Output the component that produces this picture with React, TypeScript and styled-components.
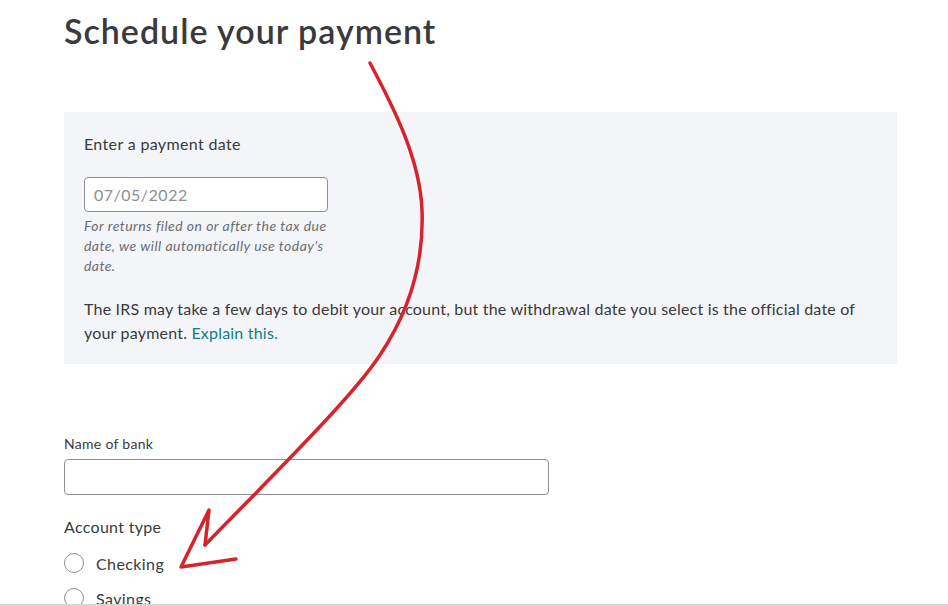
import React from "react";
import styled, { createGlobalStyle } from "styled-components";

const GlobalStyle = createGlobalStyle`
  html, body { margin: 0; padding: 0; background: #ffffff; }
  body { font-family: Lato, "Open Sans", "Liberation Sans", sans-serif; color: #393a3d; overflow: hidden; }
  * { box-sizing: border-box; }
`;

const Page = styled.div`
  position: relative;
  width: 948px;
  height: 606px;
  overflow: hidden;
  padding: 10px 0 0 64px;
`;

const Title = styled.h1`
  margin: 0;
  font-size: 34px;
  line-height: 42px;
  font-weight: 600;
  color: #393a3d;
  letter-spacing: 1px;
`;

const Panel = styled.section`
  margin-top: 60px;
  width: 833px;
  background: #f4f5f8;
  padding: 20px 20px 19px 20px;
  display: flex;
  flex-direction: column;
`;

const PanelLabel = styled.div`
  font-size: 16px;
  line-height: 24px;
  letter-spacing: 0.35px;
`;

const TextInput = styled.div<{ $w: number; $h: number }>`
  width: ${(p) => p.$w}px;
  height: ${(p) => p.$h}px;
  background: #ffffff;
  border: 1px solid #8d9096;
  border-radius: 4px;
  display: flex;
  align-items: center;
  padding: 0 9px;
  font-size: 16px;
  letter-spacing: 0.5px;
  color: #8d9096;
`;

const DateField = styled.div`
  margin-top: 21px;
  display: flex;
  flex-direction: column;
`;

const Helper = styled.p`
  margin: 4px 0 0 0;
  width: 244px;
  font-size: 14px;
  line-height: 20px;
  letter-spacing: 0.45px;
  font-style: italic;
  color: #6b6c72;
`;

const Notice = styled.p`
  margin: 21px 0 0 0;
  font-size: 16px;
  line-height: 24px;
  letter-spacing: 0.2px;
  color: #393a3d;
`;

const Link = styled.a`
  color: #0b7f85;
  text-decoration: none;
`;

const Form = styled.div`
  margin-top: 71px;
  display: flex;
  flex-direction: column;
`;

const SmallLabel = styled.label`
  font-size: 14px;
  line-height: 18px;
  letter-spacing: 0.3px;
  margin-bottom: 6px;
`;

const GroupLabel = styled.div`
  margin-top: 20px;
  font-size: 16px;
  line-height: 24px;
  letter-spacing: 0.3px;
`;

const RadioList = styled.div`
  margin-top: 12px;
  display: flex;
  flex-direction: column;
  gap: 11px;
`;

const RadioRow = styled.div`
  display: flex;
  align-items: center;
  gap: 12px;
  height: 24px;
  font-size: 16px;
  letter-spacing: 0.4px;
`;

const RadioCircle = styled.span`
  width: 20px;
  height: 20px;
  border-radius: 50%;
  border: 1px solid #8d9096;
  background: #fff;
`;

const Arrow = styled.svg`
  position: absolute;
  left: 0;
  top: 0;
  pointer-events: none;
`;

const BottomEdge = styled.div`
  position: absolute;
  left: 0;
  right: 0;
  bottom: 0;
  height: 2px;
  background: #d6d6d6;
`;

export default function App() {
  return (
    <>
      <GlobalStyle />
      <Page>
        <Title>Schedule your payment</Title>
        <Panel>
          <PanelLabel>Enter a payment date</PanelLabel>
          <DateField>
            <TextInput $w={244} $h={35}>07/05/2022</TextInput>
            <Helper>
              For returns filed on or after the tax due date, we will automatically use today's date.
            </Helper>
          </DateField>
          <Notice>
            The IRS may take a few days to debit your account, but the withdrawal date you select is the official date of your payment.{" "}
            <Link href="#">Explain this.</Link>
          </Notice>
        </Panel>
        <Form>
          <SmallLabel>Name of bank</SmallLabel>
          <TextInput $w={485} $h={36} />
          <GroupLabel>Account type</GroupLabel>
          <RadioList>
            <RadioRow>
              <RadioCircle />
              Checking
            </RadioRow>
            <RadioRow>
              <RadioCircle />
              Savings
            </RadioRow>
          </RadioList>
        </Form>
        <Arrow width="948" height="606" viewBox="0 0 948 606">
          <path
            d="M370,63 C395,110 420,160 422,210 C424,260 410,310 380,355 C352,398 270,478 205,545"
            fill="none"
            stroke="#d7242c"
            strokeWidth="3.5"
            strokeLinecap="round"
          />
          <path
            d="M205,545 L209,510 L181,567 L236,559"
            fill="none"
            stroke="#d7242c"
            strokeWidth="3.5"
            strokeLinecap="round"
            strokeLinejoin="round"
          />
        </Arrow>
        <BottomEdge />
      </Page>
    </>
  );
}
